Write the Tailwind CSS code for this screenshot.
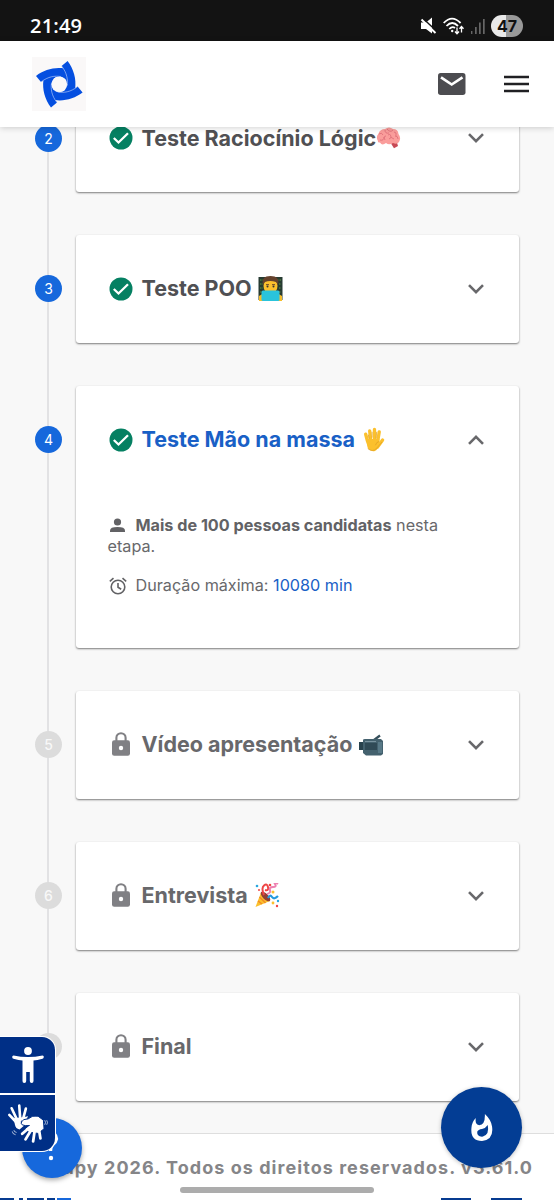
<!DOCTYPE html>
<html lang="pt-BR">
<head>
<meta charset="utf-8">
<title>Etapas</title>
<script src="https://cdn.jsdelivr.net/npm/@tailwindcss/browser@4"></script>
</head>
<body class="bg-white font-['Inter','Noto_Sans',sans-serif]">
<svg class="hidden">
  <symbol id="check" viewBox="0 0 24 24"><circle cx="12" cy="12" r="11.5" fill="#058062"/><path d="M4.800 12 9.500 16.500 19 7.200" fill="none" stroke="#fff" stroke-width="2.300"/></symbol>
  <symbol id="lock" viewBox="0 0 20 24"><path d="M5.4 9V5.8a4.6 4.6 0 0 1 9.2 0V9" fill="none" stroke="#808084" stroke-width="2.1"/><rect x="1" y="8.3" width="18" height="15.4" rx="2.2" fill="#808084"/><circle cx="10" cy="16" r="2.2" fill="#fff"/></symbol>
  <symbol id="down" viewBox="0 0 18 12"><path d="M2 2.2 9 9.2 16 2.2" fill="none" stroke="#68686b" stroke-width="2.6"/></symbol>
</svg>
<div class="relative flex h-[1200px] w-[554px] flex-col overflow-hidden">
  <div class="relative z-20 flex h-[41px] shrink-0 items-center justify-between bg-[#131313] pr-[31px] pl-[30px] pt-[11px]">
    <span class="font-['Open_Sans','Noto_Sans',sans-serif] text-[20px] leading-6 font-semibold tracking-[0.200px] text-white">21:49</span>
    <div class="flex items-center gap-[6px]">
      <svg class="h-[18px] w-[17px]" viewBox="0 0 17 18"><path d="M1 5.500h5L12 .5v16L6 12H1z" fill="#fff"/><path d="M2.500 1 17 14.500" stroke="#131313" stroke-width="1.600"/><path d="M1.500 2.500 15.500 16" stroke="#fff" stroke-width="1.900"/></svg>
      <svg class="h-[18px] w-[21px]" viewBox="0 0 21 18" fill="none" stroke="#fff" stroke-width="1.8"><path d="M.7 6Q9 -2.8 17.6 6M3.5 9Q9.2 3 15 9M6.3 12Q9.2 8.8 12 11"/><circle cx="9.2" cy="14" r="1.2" fill="#fff" stroke="none"/><path d="M14 10.500v6m-2-2 2 2.300 2-2.300M18.500 15.500V9.500m-2 2.300 2-2.300 2 2.300" stroke-width="1.3"/></svg>
      <svg class="h-[18px] w-[15px]" viewBox="0 0 15 18" fill="#666"><path d="M1 14h1.4v3H1zM5 10h1.7v7H5zM9 5.500h1.700V17H9zM13 2h1.700v15H13z"/></svg>
      <span class="flex h-[22px] w-[32px] items-center justify-center rounded-full bg-linear-to-r from-[#e9e9e9] from-48% to-[#999] to-48% font-['Inter'] text-[16px] font-bold text-[#111]">47</span>
    </div>
  </div>
  <header class="relative z-20 flex h-[86px] shrink-0 items-center justify-between bg-white pr-[25px] pl-[32px] shadow-[0_1px_6px_rgba(0,0,0,0.18)]">
    <svg class="h-[54px] w-[54px]" viewBox="32 57 54 54"><rect x="32" y="57" width="54" height="54" fill="#faf8f8"/>
      <g fill="#054fe0"><path id="blade" d="M36 76C44 70 54 67 64 68.500L70 78 62 79C56 76 48 77 41 82Z"/><use href="#blade" transform="rotate(90 59.300 84.300)"/><use href="#blade" transform="rotate(180 59.300 84.300)"/><use href="#blade" transform="rotate(270 59.300 84.300)"/></g>
      <circle cx="59.300" cy="84.300" r="11.700" fill="none" stroke="#054fe0" stroke-width="7.500"/>
      <circle cx="59.300" cy="84.300" r="7.900" fill="#faf8f8"/>
      <g fill="none" stroke="#c9d9fb" stroke-width=".6"><path id="seam" d="M41 82C48 76.500 55 75.500 61 76.600"/><use href="#seam" transform="rotate(90 59.300 84.300)"/><use href="#seam" transform="rotate(180 59.300 84.300)"/><use href="#seam" transform="rotate(270 59.300 84.300)"/></g>
    </svg>
    <div class="flex items-center gap-[38px]">
      <svg class="h-[22px] w-[28px]" viewBox="0 0 28 22"><rect width="27.500" height="22" rx="2.700" fill="#4c4c50"/><path d="M3 4.300 13.700 11.500 24.500 4.300" fill="none" stroke="#fff" stroke-width="2.700"/></svg>
      <svg class="h-[18px] w-[25px]" viewBox="0 0 25 18"><path d="M0 2h25M0 9h25M0 16h25" stroke="#202023" stroke-width="2.500"/></svg>
    </div>
  </header>

  <main class="relative -mt-[43px] flex h-[1049px] shrink-0 flex-col gap-[43px] bg-[#f8f8f8] pr-[35px] pl-[35px]">
    <div class="absolute top-0 left-[47px] h-[962px] w-[1.500px] bg-[#e2e2e4]"></div>

    <div class="flex h-[108px] shrink-0 gap-[13.500px]">
      <span class="relative mt-[40.500px] flex size-[27px] shrink-0 items-center justify-center rounded-full bg-[#1668dc] text-[14px] text-white">2</span>
      <section class="flex flex-1 items-center rounded-[3px] bg-white pr-[34.500px] pl-[33px] shadow-[0_1px_2px_rgba(0,0,0,0.5)]">
        <svg class="size-6"><use href="#check"/></svg>
        <h2 class="ml-[9px] text-[21.500px] font-bold text-[#505053]">Teste Raciocínio Lógic</h2>
        <svg class="h-[22px] w-[25px]" viewBox="0 0 25 22"><path d="M15 16.500 20.500 14l1.500 5-4 2.300z" fill="#c74955"/><path d="M2 14Q-.5 10 2.500 6.500 4 2 9 2 13-1 17 2q5 0 5.500 5 3 4 .5 8-2 3-6 1-4 2.500-7 0-4 3-6-.5Q1.500 16 2 14z" fill="#fa9d9b"/><path d="M4 13q4 1 4-3m-5-3q3-2 4 1m2-5q0 4 4 3m-2-4q3 4 6 1m-5 5q3-2 3 3m3-6q3 0 2 4m-10 0q-3 0-1 4m4-1q2-3 5 0m1-3q3 0 3 3" fill="none" stroke="#dc6c76" stroke-width=".8"/></svg>
        <svg class="ml-auto h-3 w-[18px]"><use href="#down"/></svg>
      </section>
    </div>

    <div class="flex h-[108px] shrink-0 gap-[13.500px]">
      <span class="relative mt-[40px] flex size-[27px] shrink-0 items-center justify-center rounded-full bg-[#1668dc] text-[14px] text-white">3</span>
      <section class="flex flex-1 items-center rounded-[3px] bg-white pr-[34.500px] pb-px pl-[33px] shadow-[0_1px_2px_rgba(0,0,0,0.5)]">
        <svg class="size-6"><use href="#check"/></svg>
        <h2 class="ml-[9px] text-[21.500px] font-bold text-[#505053]">Teste POO</h2>
        <svg class="ml-[6px] h-[25px] w-[25px]" viewBox="0 0 25 25"><path d="M.5 1h24v23H.5z" fill="#273b32"/><path d="M2 4h4M2 8h3M2 12h3M2 16h2M19 4h4M21 8h2M21 12h2M21 16h2" stroke="#5e9a43" stroke-dasharray="1.500 1"/><path d="M1 25v-5l5-3h13l5 3v5z" fill="#f5bd29"/><ellipse cx="12.500" cy="10" rx="7" ry="8" fill="#fbc02d"/><path d="M5 9Q3 0 12.500 0T20 9l-2-3Q12 4 7 6z" fill="#65412c"/><path d="M8 8.700h3m3 0h3" stroke="#65412c"/><circle cx="9.500" cy="10.500" r="1" fill="#333"/><circle cx="15.500" cy="10.500" r="1" fill="#333"/><rect x="3.500" y="14.500" width="18" height="10.500" rx="1.500" fill="#29c4dc"/></svg>
        <svg class="ml-auto h-3 w-[18px]"><use href="#down"/></svg>
      </section>
    </div>

    <div class="flex h-[262px] shrink-0 gap-[13.500px]">
      <span class="relative mt-[40px] flex size-[27px] shrink-0 items-center justify-center rounded-full bg-[#1668dc] text-[14px] text-white">4</span>
      <section class="flex flex-1 flex-col rounded-[3px] bg-white pr-[34.500px] pl-[33px] shadow-[0_1px_2px_rgba(0,0,0,0.5)]">
        <div class="flex h-[107px] items-center">
          <svg class="size-6"><use href="#check"/></svg>
          <h2 class="ml-[9px] text-[21.500px] font-bold text-[#1960c6]">Teste Mão na massa</h2>
          <svg class="ml-[8px] h-[25px] w-[22px]" viewBox="0 0 23 26"><path d="M7 21 4.500 14 2.800 7.500M8 14 7 4M12 13 12 2.500M15.500 14 17 5M15 21 20.500 13.500" fill="none" stroke="#fbc02d" stroke-width="3.500" stroke-linecap="round"/><path d="M3.500 12.500h13.500v4l1 1q-2 6-5.500 7.500-5 1-7.500-3z" fill="#fbc02d"/><path d="M5.500 8l1 4M9.500 5v6M14.300 5l-.6 7M13 19q1-3.500 4-4M5 22.500q5 4 9 0l6-7" fill="none" stroke="#e0a025" stroke-width=".8"/></svg>
          <svg class="ml-auto h-3 w-[18px] rotate-180"><use href="#down"/></svg>
        </div>
        <p class="mt-[22px] -ml-px text-[16.180px] leading-[21px] text-[#68686b]"><svg class="mr-[9px] ml-px inline-block h-[15px] w-[18px] align-[-2px]" viewBox="0 0 18 15"><circle cx="8.500" cy="4" r="3.600" fill="#626265"/><path d="M1 14v-1.600Q1 9 8.500 9T16 12.400V14z" fill="#626265"/></svg><strong class="font-bold text-[#626265]">Mais de 100 pessoas candidatas</strong> nesta<br>etapa.</p>
        <p class="mt-[18px] -ml-px flex items-center text-[16.180px] leading-[21px] text-[#68686b]"><svg class="mr-[9px] ml-[1px] h-[18px] w-[18px]" viewBox="0 0 18 18" fill="none" stroke="#626265" stroke-width="1.600"><circle cx="9" cy="10" r="6.800"/><path d="M9 6v4.300l3.200 2M.8 4.300 4.500 1.200M17.200 4.300 13.500 1.200"/></svg>Duração máxima:&nbsp;<span class="text-[#1960c6]">10080 min</span></p>
      </section>
    </div>

    <div class="flex h-[108px] shrink-0 gap-[13.500px]">
      <span class="relative mt-[40px] flex size-[27px] shrink-0 items-center justify-center rounded-full bg-[#dcdcdc] text-[14px] font-medium text-[#f8f8f8]">5</span>
      <section class="flex flex-1 items-center rounded-[3px] bg-white pr-[34.500px] pb-px pl-[33px] shadow-[0_1px_2px_rgba(0,0,0,0.5)]">
        <svg class="mx-[2px] -mt-px h-6 w-5"><use href="#lock"/></svg>
        <h2 class="ml-[9px] text-[21.500px] font-bold text-[#68686b]">Vídeo apresentação</h2>
        <svg class="ml-[6px] h-[22px] w-[26px]" viewBox="0 0 26 22"><path d="M16 6 22 1.500" stroke="#36505c" stroke-width="2.200"/><path d="M1 8h5v8H1z" fill="#29434e"/><path d="M5 6q0-1 2-1h16l2 2v13l-2 1.500H8L5 19z" fill="#44616e"/><path d="M7 9h12v7H7z" fill="#304a56"/><path d="M20 8h4v11h-4z" fill="#587987"/><path d="M7 7.500h11" stroke="#78929e"/></svg>
        <svg class="ml-auto h-3 w-[18px]"><use href="#down"/></svg>
      </section>
    </div>

    <div class="flex h-[108px] shrink-0 gap-[13.500px]">
      <span class="relative mt-[40px] flex size-[27px] shrink-0 items-center justify-center rounded-full bg-[#dcdcdc] text-[14px] font-medium text-[#f8f8f8]">6</span>
      <section class="flex flex-1 items-center rounded-[3px] bg-white pr-[34.500px] pb-px pl-[33px] shadow-[0_1px_2px_rgba(0,0,0,0.5)]">
        <svg class="mx-[2px] -mt-px h-6 w-5"><use href="#lock"/></svg>
        <h2 class="ml-[9px] text-[21.500px] font-bold text-[#68686b]">Entrevista</h2>
        <svg class="ml-[6px] h-[25px] w-[26px]" viewBox="0 0 26 25"><path d="M1.500 24 7 9.500 16 18z" fill="#fbc02d"/><path d="M4 18l4 3M5.500 14l6 6" stroke="#f28b25" stroke-width="1.500"/><ellipse cx="11.500" cy="13.500" rx="2.800" ry="6.200" transform="rotate(-45 11.500 13.500)" fill="#913f35"/><path d="M10 12Q7 5 10 2.500t4 1.500-3 3" fill="none" stroke="#ee4545" stroke-width="2"/><path d="M13 11q4-1 3-4t3-3 2-3 3 0" fill="none" stroke="#ee80b1" stroke-width="2"/><path d="M14 15q2-4 4-1t6-1" fill="none" stroke="#2499dd" stroke-width="2.200"/><g fill="#ef4545"><circle cx="16" cy="2" r="1.300"/><circle cx="5" cy="7" r="1"/><circle cx="23" cy="23" r="1.200"/></g><g fill="#29a7df"><circle cx="3" cy="3" r="1.300"/><circle cx="24" cy="18" r="1.200"/></g><g fill="#fbc02d"><circle cx="19" cy="9" r="1.500"/><circle cx="19" cy="20" r="1.400"/></g></svg>
        <svg class="ml-auto h-3 w-[18px]"><use href="#down"/></svg>
      </section>
    </div>

    <div class="flex h-[108px] shrink-0 gap-[13.500px]">
      <span class="relative mt-[40px] flex size-[27px] shrink-0 items-center justify-center rounded-full bg-[#dcdcdc] text-[14px] font-medium text-[#f8f8f8]">7</span>
      <section class="flex flex-1 items-center rounded-[3px] bg-white pr-[34.500px] pb-px pl-[33px] shadow-[0_1px_2px_rgba(0,0,0,0.5)]">
        <svg class="mx-[2px] -mt-px h-6 w-5"><use href="#lock"/></svg>
        <h2 class="ml-[9px] text-[21.500px] font-bold text-[#68686b]">Final</h2>
        <svg class="ml-auto h-3 w-[18px]"><use href="#down"/></svg>
      </section>
    </div>
  </main>

  <footer class="flex h-[67px] shrink-0 flex-col border-t border-[#dedede] bg-white">
    <p class="mt-[22px] mr-[21px] self-end whitespace-nowrap text-[18px] leading-6 font-bold tracking-[1.050px] text-[#858588]">Gupy 2026. Todos os direitos reservados. v3.61.0</p>
    <div class="mt-[7px] ml-[180px] h-[6px] w-[194px] shrink-0 rounded-full bg-[#acacac]"></div>
    <div class="mt-[5px] flex h-[2px] shrink-0"><i class="h-[2px] w-[14px] bg-[#063b90]"></i><i class="ml-[5px] h-[2px] w-[4px] bg-[#063b90]"></i><i class="ml-[4px] h-[2px] w-[17px] bg-[#063b90]"></i><i class="ml-[3px] h-[2px] w-[8px] bg-[#063b90]"></i><i class="ml-[2px] h-[2px] w-[14px] bg-[#1668dc]"></i><i class="ml-[370px] h-[2px] w-[30px] bg-[#063b90]"></i><i class="ml-[20px] h-[2px] w-[31px] bg-[#063b90]"></i></div>
  </footer>

  <div class="absolute top-[1118px] left-[22px] size-[60px] rounded-full bg-[#1668dc] shadow-[0_2px_5px_rgba(0,0,0,0.35)]">
    <svg class="size-[60px]" viewBox="0 0 60 60"><path d="M22 21q1-6 6.500-6t6 6q-.5 3-4 6-2 2-2 6" fill="none" stroke="#fff" stroke-width="3.300"/><circle cx="29" cy="40" r="2.200" fill="#fff"/></svg>
  </div>
  <div class="absolute top-[1036px] left-0 flex h-[116px] w-[56px] flex-col gap-[2px] overflow-hidden rounded-r-[14px] border border-l-0 border-white bg-white">
    <div class="flex h-[56px] items-center bg-[#002f86] pl-[12px]">
      <svg class="h-[38px] w-[32px]" viewBox="0 0 32 38" fill="#fff"><circle cx="16" cy="5" r="3.900"/><path d="M1.500 9.500Q16 12.500 30.500 9.500q1.500 0 1.300 1.500t-1.300 1.800Q25 14.300 21.500 14.500V35q0 2-1.800 2t-1.900-2V26h-3.600v9q0 2-1.900 2t-1.800-2V14.500Q7 14.300 1.500 12.800.2 12.500.2 11t1.300-1.500z"/></svg>
    </div>
    <div class="flex h-[56px] items-center bg-[#002f86] pl-[7px]">
      <svg class="h-[43px] w-[43px]" viewBox="20 35 130 130">
        <g fill="none" stroke="#fff" stroke-width="8" stroke-linecap="round"><path d="M46 94 27 74M50 88 34 54M60 86 57 46M68 88 77 55"/></g>
        <path d="M40 84 72 80 84 78 78 88 62 92Q60 102 72 106L58 118Q46 116 44 104Z" fill="#fff"/>
        <path d="M64 95Q68 86 84 86Q96 74 114 78L130 90 132 116 114 130 86 126 74 116 88 106Q74 108 66 104 61 100 64 95Z" fill="#fff" stroke="#002f86" stroke-width="3"/>
        <g fill="none" stroke="#fff" stroke-width="8.500" stroke-linecap="round"><path d="M88 112 66 131M94 118 76 148M104 120 99 154M116 114 121 145"/></g>
        <path d="M88 98 126 90 129 114 112 126 92 122z" fill="#fff"/>
        <path d="M134 90q5 7 0 14M140 90q5 7 0 14M41 120q-1 5 8 7M36 124q0 8 10 10" fill="none" stroke="#fff" stroke-width="2"/>
      </svg>
    </div>
  </div>
  <div class="absolute top-[1087px] left-[441px] flex size-[81px] items-center justify-center rounded-full bg-[#033d94] shadow-[0_1px_4px_rgba(0,0,0,0.25)]">
    <svg class="h-[29px] w-[22px]" viewBox="0 0 23 30"><path d="M14.500 1Q21 7 22 14q2 14-10.500 15Q-1 29 .5 15 1 9 5 5q-1 7 3 7.500 7 .5 6.500-11.500z" fill="#fff"/><path d="M17.500 12.500q2 10-5 12Q6 25 6.500 19.500q1-2.500 5-3 4-.7 6-4z" fill="#033d94"/></svg>
  </div>
</div>
</body>
</html>
